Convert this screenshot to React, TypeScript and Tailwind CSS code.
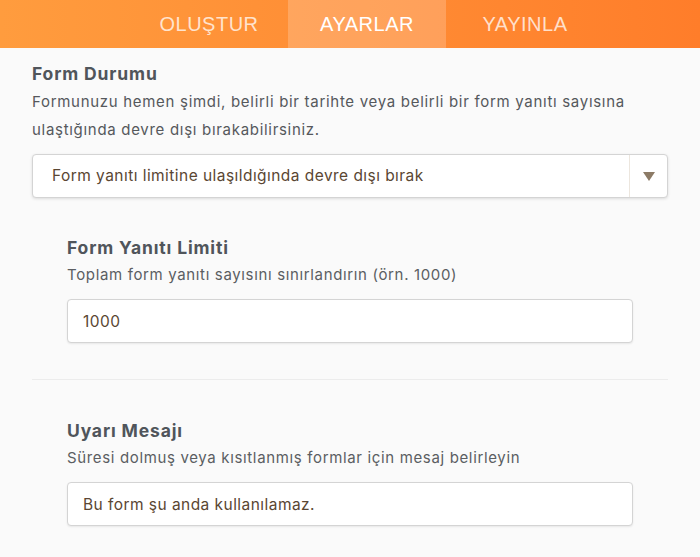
import React, { useState } from "react";

const tabs = ["OLUŞTUR", "AYARLAR", "YAYINLA"];

const Field = ({
  title,
  hint,
  value,
  onChange,
}: {
  title: string;
  hint: string;
  value: string;
  onChange: (v: string) => void;
}) => (
  <div className="mx-[32px] px-[35px]">
    <h3 className="text-[17.5px] font-bold text-[#50555b] leading-[24px] tracking-[0.85px]">{title}</h3>
    <p className="mt-[3px] text-[15px] text-[#5b5e62] leading-[24px] tracking-[0.65px]">{hint}</p>
    <input
      type="text"
      value={value}
      onChange={(e) => onChange(e.target.value)}
      className="mt-[12px] block w-full h-[44px] px-[15px] bg-white border border-[#d4d4d4] rounded-[4px] shadow-[0_1px_2px_rgba(0,0,0,0.08)] text-[15.5px] tracking-[0.45px] text-[#5a4632] outline-none"
    />
  </div>
);

export default function App() {
  const [active] = useState(1);
  const [limit, setLimit] = useState("1000");
  const [message, setMessage] = useState("Bu form şu anda kullanılamaz.");

  return (
    <div
      className="w-[700px] h-[557px] overflow-hidden bg-[#fafafa]"
      style={{ fontFamily: 'Inter, "Liberation Sans", Arial, sans-serif' }}
    >
      <div
        className="h-[48px] flex pl-[130px] bg-gradient-to-r from-[#ff9c3e] to-[#ff7d2a]"
        style={{ fontFamily: '"Liberation Sans", Arial, sans-serif' }}
      >
        {tabs.map((t, i) => (
          <div
            key={t}
            className={
              i === active
                ? "flex items-center justify-center w-[158px] bg-white/20 text-white text-[20px] tracking-[0.5px]"
                : "flex items-center justify-center w-[158px] text-white/75 text-[20px] tracking-[0.5px]"
            }
          >
            {t}
          </div>
        ))}
      </div>

      <div className="px-[32px] pt-[14px]">
        <h2 className="text-[17.5px] font-bold text-[#50555b] leading-[24px] tracking-[0.85px]">Form Durumu</h2>
        <p className="mt-[2px] text-[15px] text-[#55585c] leading-[28px] tracking-[0.7px]">
          Formunuzu hemen şimdi, belirli bir tarihte veya belirli bir form yanıtı sayısına
          ulaştığında devre dışı bırakabilirsiniz.
        </p>
        <div className="mt-[10px] flex h-[44px] bg-white border border-[#d4d4d4] rounded-[4px] shadow-[0_1px_3px_rgba(0,0,0,0.12)]">
          <div className="flex-1 flex items-center pl-[19px] text-[15.5px] tracking-[0.45px] text-[#5a4632]">
            Form yanıtı limitine ulaşıldığında devre dışı bırak
          </div>
          <div className="w-[38px] border-l border-[#ece6de] flex items-center justify-center">
            <svg width="12" height="9" viewBox="0 0 12 9">
              <path d="M0 0 H12 L6 9 Z" fill="#8c7b66" />
            </svg>
          </div>
        </div>
      </div>

      <div className="mt-[38px]">
        <Field
          title="Form Yanıtı Limiti"
          hint="Toplam form yanıtı sayısını sınırlandırın (örn. 1000)"
          value={limit}
          onChange={setLimit}
        />
      </div>

      <div className="mx-[32px] mt-[36px] border-t border-[#ececec]" />

      <div className="mt-[39px]">
        <Field
          title="Uyarı Mesajı"
          hint="Süresi dolmuş veya kısıtlanmış formlar için mesaj belirleyin"
          value={message}
          onChange={setMessage}
        />
      </div>
    </div>
  );
}
